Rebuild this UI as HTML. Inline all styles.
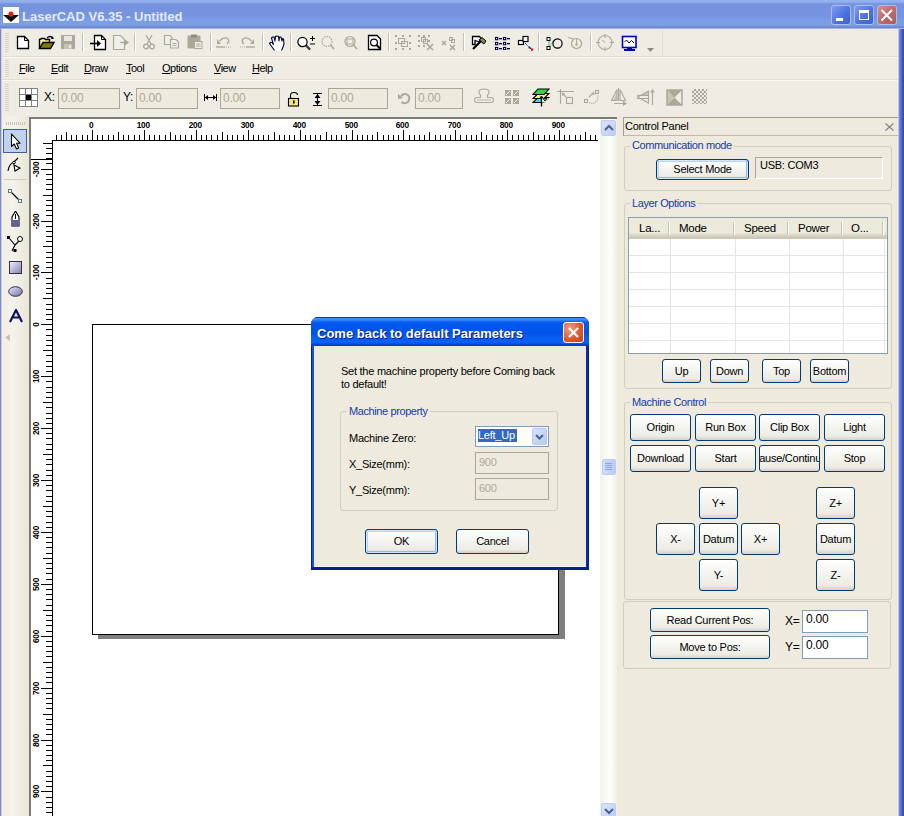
<!DOCTYPE html><html><head><meta charset="utf-8"><style>
*{margin:0;padding:0;box-sizing:border-box}
html,body{width:904px;height:816px;overflow:hidden;background:#eeebde;font-family:"Liberation Sans", sans-serif;font-size:11px;color:#000;letter-spacing:-0.25px}
.a{position:absolute}
.t{position:absolute;white-space:nowrap;line-height:13px}
.btn{position:absolute;border:1px solid #003c74;border-radius:3px;background:linear-gradient(#ffffff 0%,#f6f6f2 40%,#ecebe4 85%,#d6d0c5 100%);text-align:center;white-space:nowrap;font-size:11px;color:#000}
.btn.def{box-shadow:inset 0 0 0 1px #cee7ff, inset -1px -1px 0 1px #98b8ea, inset 1px 1px 0 1px #bcd4f6}
.grp{position:absolute;border:1px solid #d0d0bf;border-radius:3px}
.glab{position:absolute;color:#143aa6;letter-spacing:-0.4px;background:#eeebde;padding:0 2px;white-space:nowrap;line-height:13px}
.edit{position:absolute;border:1px solid #7f9db9;background:#fff}
.edis{position:absolute;border:1px solid #a9a797;background:#eeebde;color:#aca899}
</style></head><body>
<div class="a" style="left:0;top:0;width:904px;height:30px;background:linear-gradient(#93b1ee 0px,#93b1ee 2px,#7f9ce3 3px,#7593dd 5px,#7694df 16px,#7a9ce8 20px,#7aa2e0 25px,#7088d0 27px,#6a80c8 28px,#e8ebf8 29px,#e8ebf8 30px)"></div>
<div class="a" style="left:0;top:29px;width:2px;height:787px;background:linear-gradient(90deg,#7f88c8 0px,#7f88c8 1px,#c8cdee 1px)"></div>
<svg class="a" style="left:3px;top:7px" width="16" height="16" viewBox="0 0 16 16">
<rect width="16" height="16" fill="#fff"/><path d="M0 8 L16 8 L8 15 Z" fill="#101010"/><circle cx="8" cy="7" r="2.6" fill="#e02010"/></svg>
<div class="t" style="left:22px;top:8.5px;font-weight:bold;font-size:13px;line-height:16px;color:#e4ebfb;letter-spacing:0px">LaserCAD V6.35 - Untitled</div>
<div class="a" style="left:831px;top:5px;width:20px;height:20px;border:1px solid #a9bdf3;border-radius:3px;background:linear-gradient(135deg,#7d9cf0,#4d6fdc 60%,#3f62d2)"><div class="a" style="left:4px;top:12px;width:7px;height:3px;background:#fff"></div></div>
<div class="a" style="left:854px;top:5px;width:20px;height:20px;border:1px solid #a9bdf3;border-radius:3px;background:linear-gradient(135deg,#7d9cf0,#4d6fdc 60%,#3f62d2)"><div class="a" style="left:4px;top:4px;width:10px;height:10px;border:1px solid #fff;border-top-width:3px"></div></div>
<div class="a" style="left:877px;top:5px;width:20px;height:20px;border:1px solid #a9bdf3;border-radius:3px;background:linear-gradient(135deg,#d78c8c,#b86868 60%,#a85c5c)"><svg class="a" style="left:0;top:0" width="18" height="18"><path d="M3.5 4 L14 14.5 M14 4 L3.5 14.5" stroke="#fff" stroke-width="1.9"/></svg></div>
<div class="a" style="left:2px;top:30px;width:897px;height:87px;background:#efede3"></div>
<div class="a" style="left:2px;top:56px;width:897px;height:1px;background:#e2dfd0"></div>
<div class="a" style="left:2px;top:57px;width:897px;height:1px;background:#f8f7f2"></div>
<div class="a" style="left:2px;top:79px;width:897px;height:1px;background:#e2dfd0"></div>
<div class="a" style="left:2px;top:80px;width:897px;height:1px;background:#f8f7f2"></div>
<div class="a" style="left:662px;top:29px;width:1px;height:27px;background:#e2dfd0"></div>
<div class="a" style="left:5px;top:33px;width:4px;height:1px;background:#d8d4c3"></div><div class="a" style="left:5px;top:35px;width:4px;height:1px;background:#d8d4c3"></div><div class="a" style="left:5px;top:37px;width:4px;height:1px;background:#d8d4c3"></div><div class="a" style="left:5px;top:39px;width:4px;height:1px;background:#d8d4c3"></div><div class="a" style="left:5px;top:41px;width:4px;height:1px;background:#d8d4c3"></div><div class="a" style="left:5px;top:43px;width:4px;height:1px;background:#d8d4c3"></div><div class="a" style="left:5px;top:45px;width:4px;height:1px;background:#d8d4c3"></div><div class="a" style="left:5px;top:47px;width:4px;height:1px;background:#d8d4c3"></div><div class="a" style="left:5px;top:49px;width:4px;height:1px;background:#d8d4c3"></div><div class="a" style="left:5px;top:51px;width:4px;height:1px;background:#d8d4c3"></div>
<div class="a" style="left:5px;top:60px;width:4px;height:1px;background:#d8d4c3"></div><div class="a" style="left:5px;top:62px;width:4px;height:1px;background:#d8d4c3"></div><div class="a" style="left:5px;top:64px;width:4px;height:1px;background:#d8d4c3"></div><div class="a" style="left:5px;top:66px;width:4px;height:1px;background:#d8d4c3"></div><div class="a" style="left:5px;top:68px;width:4px;height:1px;background:#d8d4c3"></div><div class="a" style="left:5px;top:70px;width:4px;height:1px;background:#d8d4c3"></div><div class="a" style="left:5px;top:72px;width:4px;height:1px;background:#d8d4c3"></div><div class="a" style="left:5px;top:74px;width:4px;height:1px;background:#d8d4c3"></div><div class="a" style="left:5px;top:76px;width:4px;height:1px;background:#d8d4c3"></div>
<div class="a" style="left:5px;top:84px;width:4px;height:1px;background:#d8d4c3"></div><div class="a" style="left:5px;top:86px;width:4px;height:1px;background:#d8d4c3"></div><div class="a" style="left:5px;top:88px;width:4px;height:1px;background:#d8d4c3"></div><div class="a" style="left:5px;top:90px;width:4px;height:1px;background:#d8d4c3"></div><div class="a" style="left:5px;top:92px;width:4px;height:1px;background:#d8d4c3"></div><div class="a" style="left:5px;top:94px;width:4px;height:1px;background:#d8d4c3"></div><div class="a" style="left:5px;top:96px;width:4px;height:1px;background:#d8d4c3"></div><div class="a" style="left:5px;top:98px;width:4px;height:1px;background:#d8d4c3"></div><div class="a" style="left:5px;top:100px;width:4px;height:1px;background:#d8d4c3"></div><div class="a" style="left:5px;top:102px;width:4px;height:1px;background:#d8d4c3"></div><div class="a" style="left:5px;top:104px;width:4px;height:1px;background:#d8d4c3"></div><div class="a" style="left:5px;top:106px;width:4px;height:1px;background:#d8d4c3"></div><div class="a" style="left:5px;top:108px;width:4px;height:1px;background:#d8d4c3"></div><div class="a" style="left:5px;top:110px;width:4px;height:1px;background:#d8d4c3"></div>
<div class="a" style="left:82px;top:33px;width:1px;height:18px;background:#c5c2b2"></div><div class="a" style="left:83px;top:33px;width:1px;height:18px;background:#fff"></div>
<div class="a" style="left:134px;top:33px;width:1px;height:18px;background:#c5c2b2"></div><div class="a" style="left:135px;top:33px;width:1px;height:18px;background:#fff"></div>
<div class="a" style="left:210px;top:33px;width:1px;height:18px;background:#c5c2b2"></div><div class="a" style="left:211px;top:33px;width:1px;height:18px;background:#fff"></div>
<div class="a" style="left:262px;top:33px;width:1px;height:18px;background:#c5c2b2"></div><div class="a" style="left:263px;top:33px;width:1px;height:18px;background:#fff"></div>
<div class="a" style="left:290px;top:33px;width:1px;height:18px;background:#c5c2b2"></div><div class="a" style="left:291px;top:33px;width:1px;height:18px;background:#fff"></div>
<div class="a" style="left:388px;top:33px;width:1px;height:18px;background:#c5c2b2"></div><div class="a" style="left:389px;top:33px;width:1px;height:18px;background:#fff"></div>
<div class="a" style="left:463px;top:33px;width:1px;height:18px;background:#c5c2b2"></div><div class="a" style="left:464px;top:33px;width:1px;height:18px;background:#fff"></div>
<div class="a" style="left:538px;top:33px;width:1px;height:18px;background:#c5c2b2"></div><div class="a" style="left:539px;top:33px;width:1px;height:18px;background:#fff"></div>
<div class="a" style="left:590px;top:33px;width:1px;height:18px;background:#c5c2b2"></div><div class="a" style="left:591px;top:33px;width:1px;height:18px;background:#fff"></div>
<svg class="a" style="left:16px;top:35px" width="14" height="15" viewBox="0 0 14 15"><path d="M1.5 1.5 H8.5 L12.5 5.5 V13.5 H1.5 Z" fill="#fff" stroke="#000" stroke-width="1.3"/><path d="M8.5 1.5 V5.5 H12.5" fill="none" stroke="#000" stroke-width="1"/></svg>
<svg class="a" style="left:38px;top:35px" width="18" height="15" viewBox="0 0 18 15"><path d="M1.5 13.5 V4.5 L3.5 3.5 H6.5 L7.5 4.5 H11.5 V7.5" fill="#f4f48c" stroke="#000" stroke-width="1.4"/><path d="M1.5 13.5 L5 7.5 H16 L12.5 13.5 Z" fill="#7d7d10" stroke="#000" stroke-width="1.4"/><path d="M9 3 Q12 0 15 3" fill="none" stroke="#000" stroke-width="1.2"/><path d="M14 1 L16 4 L13 4 Z" fill="#000"/></svg>
<svg class="a" style="left:61px;top:35px" width="15" height="15" viewBox="0 0 15 15"><rect x="0" y="0" width="14" height="14" fill="#aca899"/><rect x="3" y="1" width="8" height="5" fill="#e8e6dc"/><rect x="3" y="9" width="8" height="5" fill="#c6c3b6"/><rect x="8" y="10" width="2" height="3" fill="#e8e6dc"/></svg>
<svg class="a" style="left:89px;top:34px" width="18" height="17" viewBox="0 0 18 17"><path d="M5.5 1.5 H12.5 L16.5 5.5 V15.5 H5.5 Z" fill="#fff" stroke="#000" stroke-width="1.3"/><path d="M12.5 1.5 V5.5 H16.5" fill="none" stroke="#000" stroke-width="1"/><path d="M1 9.5 H9" stroke="#000" stroke-width="1.6"/><path d="M8 6 L12 9.5 L8 13 Z" fill="#000"/></svg>
<svg class="a" style="left:112px;top:34px" width="18" height="17" viewBox="0 0 18 17"><path d="M1.5 1.5 H8.5 L12.5 5.5 V15.5 H1.5 Z" fill="#f0efe8" stroke="#aca899" stroke-width="1.2"/><path d="M8 8.5 H14" stroke="#aca899" stroke-width="1.2"/><path d="M13 5.5 L17 8.5 L13 11.5 Z" fill="#aca899"/></svg>
<svg class="a" style="left:143px;top:34px" width="12" height="16" viewBox="0 0 12 16"><path d="M3 1 L8 10 M9 1 L4 10" stroke="#aca899" stroke-width="1.3" fill="none"/><circle cx="3" cy="12.5" r="2.3" fill="none" stroke="#aca899" stroke-width="1.3"/><circle cx="9" cy="12.5" r="2.3" fill="none" stroke="#aca899" stroke-width="1.3"/></svg>
<svg class="a" style="left:163px;top:34px" width="17" height="15" viewBox="0 0 17 15"><path d="M1.5 1.5 H7 L9 3.5 V10.5 H1.5 Z" fill="#f0efe8" stroke="#aca899" stroke-width="1.2"/><path d="M7.5 5.5 H13 L15.5 8 V14 H7.5 Z" fill="#f0efe8" stroke="#aca899" stroke-width="1.2"/><path d="M9.5 9.5 H13.5 M9.5 11.5 H13.5" stroke="#aca899"/></svg>
<svg class="a" style="left:187px;top:34px" width="16" height="16" viewBox="0 0 16 16"><rect x="0.5" y="1.5" width="13" height="13" rx="1" fill="#aca899"/><rect x="4" y="0.5" width="6" height="3" fill="#8f8c80"/><rect x="7.5" y="7.5" width="7.5" height="7" fill="#f0efe8" stroke="#aca899"/><path d="M9 10 H13.5 M9 12 H13.5" stroke="#aca899"/></svg>
<svg class="a" style="left:216px;top:35px" width="16" height="14" viewBox="0 0 16 14"><path d="M3.5 6 Q8 1 12 4 Q14 6 11 9" fill="none" stroke="#aca899" stroke-width="1.4"/><path d="M1 4 L5 9 L1 9 Z" fill="#aca899"/><path d="M0 12 H9" stroke="#aca899" stroke-width="1.4"/><path d="M10 12 H15" stroke="#aca899" stroke-width="1" stroke-dasharray="1 1"/></svg>
<svg class="a" style="left:239px;top:35px" width="16" height="14" viewBox="0 0 16 14"><path d="M12.5 6 Q8 1 4 4 Q2 6 5 9" fill="none" stroke="#aca899" stroke-width="1.4"/><path d="M15 4 L11 9 L15 9 Z" fill="#aca899"/><path d="M7 12 H16" stroke="#aca899" stroke-width="1.4"/><path d="M1 12 H6" stroke="#aca899" stroke-width="1" stroke-dasharray="1 1"/></svg>
<svg class="a" style="left:269px;top:35px" width="17" height="17" viewBox="0 0 17 17"><path d="M5.5 15.5 L0.5 8.5 L1.5 7.5 L3 7.5 L4.5 9.5 L2.5 3 L3.5 2 L5 2 L6 6 L6.5 1.5 L8 1 L9.5 1.5 L10 6 L10.5 2 L12 2 L13 6 L13.5 3.5 L14.5 4 L15 9 L14 12 L12.5 15.5" fill="#fff" stroke="#000038" stroke-width="1.1" stroke-linejoin="round"/></svg>
<svg class="a" style="left:296px;top:35px" width="20" height="16" viewBox="0 0 20 16"><circle cx="6.5" cy="7" r="4.6" fill="#fff" stroke="#000" stroke-width="1.2"/><path d="M10 10.5 L14 14.5" stroke="#000" stroke-width="2.2"/><path d="M10.5 11 L13.5 14" stroke="#8080c0" stroke-width="1"/><path d="M14 3.5 H19 M16.5 1 V6 M14 9 H19" stroke="#000" stroke-width="1"/></svg>
<svg class="a" style="left:320px;top:35px" width="16" height="16" viewBox="0 0 16 16"><circle cx="7" cy="6.5" r="5" fill="none" stroke="#aca899" stroke-width="1.2" stroke-dasharray="1.5 1"/><path d="M10.5 10 L14 14" stroke="#aca899" stroke-width="1.6"/></svg>
<svg class="a" style="left:343px;top:35px" width="16" height="16" viewBox="0 0 16 16"><circle cx="7" cy="6.5" r="5" fill="none" stroke="#aca899" stroke-width="1.2"/><rect x="4" y="4" width="6" height="5" fill="none" stroke="#aca899"/><path d="M10.5 10 L14 14" stroke="#aca899" stroke-width="1.6"/></svg>
<svg class="a" style="left:367px;top:34px" width="15" height="17" viewBox="0 0 15 17"><path d="M1.5 1.5 H10 L13.5 5 V15.5 H1.5 Z" fill="#fff" stroke="#000" stroke-width="1.3"/><circle cx="7" cy="8.5" r="3.4" fill="none" stroke="#000" stroke-width="1.2"/><path d="M9.5 11 L13 14.5" stroke="#000" stroke-width="2"/></svg>
<svg class="a" style="left:395px;top:34px" width="16" height="16" viewBox="0 0 16 16"><g fill="#aca899"><rect x="0" y="1" width="2" height="2"/><rect x="7" y="1" width="2" height="2"/><rect x="14" y="1" width="2" height="2"/><rect x="0" y="8" width="2" height="2"/><rect x="14" y="8" width="2" height="2"/><rect x="0" y="14" width="2" height="2"/><rect x="7" y="14" width="2" height="2"/><rect x="14" y="14" width="2" height="2"/></g><rect x="3.5" y="4.5" width="6" height="5" fill="none" stroke="#aca899"/><rect x="6.5" y="7.5" width="6" height="5" fill="none" stroke="#aca899"/></svg>
<svg class="a" style="left:418px;top:34px" width="16" height="17" viewBox="0 0 16 17"><g fill="#aca899"><rect x="0" y="1" width="2" height="2"/><rect x="5" y="1" width="2" height="2"/><rect x="10" y="1" width="2" height="2"/><rect x="0" y="6" width="2" height="2"/><rect x="10" y="6" width="2" height="2"/><rect x="0" y="11" width="2" height="2"/><rect x="5" y="11" width="2" height="2"/></g><rect x="3.5" y="3.5" width="4" height="4" fill="none" stroke="#aca899"/><rect x="5.5" y="5.5" width="4" height="4" fill="none" stroke="#aca899"/><path d="M9 10 L15 16 M15 10 L9 16" stroke="#aca899" stroke-width="1.6"/></svg>
<svg class="a" style="left:441px;top:34px" width="17" height="17" viewBox="0 0 17 17"><path d="M1 7 L5 11 M5 7 L1 11" stroke="#aca899" stroke-width="1.4"/><rect x="8.5" y="3.5" width="3" height="3" fill="none" stroke="#aca899"/><rect x="10.5" y="5.5" width="3" height="3" fill="none" stroke="#aca899"/><path d="M9 11 L14 16 M14 11 L9 16" stroke="#aca899" stroke-width="1.6"/></svg>
<svg class="a" style="left:471px;top:35px" width="16" height="16" viewBox="0 0 16 16"><path d="M1.5 1.5 H8.5 L10.5 4 L9 7 L4 5.5 L4 9.5 H1.5 Z" fill="#fff" stroke="#000" stroke-width="1.3"/><path d="M8 5 L11 2.5 L15 6 L13 9 Z" fill="#8a8a50" stroke="#000" stroke-width="1"/><path d="M10 6 L2 14" stroke="#000" stroke-width="2.2"/></svg>
<svg class="a" style="left:494px;top:36px" width="17" height="14" viewBox="0 0 17 14"><g fill="#fff" stroke="#000030" stroke-width="1.1"><rect x="1.5" y="1.5" width="2.2" height="2.2"/><rect x="1.5" y="6.5" width="2.2" height="2.2"/><rect x="1.5" y="11.5" width="2.2" height="2.2"/><rect x="9.5" y="1.5" width="2.2" height="2.2"/><rect x="9.5" y="6.5" width="2.2" height="2.2"/><rect x="9.5" y="11.5" width="2.2" height="2.2"/></g><g fill="#000030"><rect x="5" y="2" width="3" height="1.3"/><rect x="5" y="7" width="3" height="1.3"/><rect x="5" y="12" width="3" height="1.3"/><rect x="13" y="2" width="3" height="1.3"/><rect x="13" y="7" width="3" height="1.3"/><rect x="13" y="12" width="3" height="1.3"/></g></svg>
<svg class="a" style="left:517px;top:35px" width="18" height="16" viewBox="0 0 18 16"><rect x="1.5" y="5.5" width="5" height="4" fill="#fff" stroke="#000" stroke-width="1.2"/><rect x="6" y="1.5" width="5" height="5" fill="#fff" stroke="#000" stroke-width="1.2"/><path d="M8 8 L14 14" stroke="#0020a0" stroke-width="1" stroke-dasharray="1.2 0.6"/><path d="M11 13 L14 14 L13 11 Z" fill="#0020a0"/><rect x="14" y="13.5" width="2.2" height="2.2" fill="#e00000"/></svg>
<svg class="a" style="left:546px;top:37px" width="17" height="13" viewBox="0 0 17 13"><path d="M3 2 L3 11" stroke="#40c0c0" stroke-width="1.2"/><path d="M3 11 L7 4" stroke="#a0d060" stroke-width="1"/><rect x="1" y="0.5" width="3" height="3" fill="#fff" stroke="#000"/><rect x="1" y="9.5" width="3" height="3" fill="#fff" stroke="#000"/><circle cx="11.5" cy="6.5" r="4.6" fill="none" stroke="#000" stroke-width="1.2"/></svg>
<svg class="a" style="left:567px;top:36px" width="16" height="14" viewBox="0 0 16 14"><path d="M1 1.5 L7 3" stroke="#aca899" stroke-width="1.2"/><circle cx="9.5" cy="7.5" r="5" fill="none" stroke="#aca899" stroke-width="1.2"/><path d="M9.5 3 V8" stroke="#aca899"/><circle cx="9.5" cy="8.5" r="1.2" fill="#aca899"/></svg>
<svg class="a" style="left:596px;top:34px" width="18" height="17" viewBox="0 0 18 17"><circle cx="9" cy="8.5" r="7" fill="none" stroke="#aca899" stroke-width="1.1"/><path d="M9 0 V4 M9 13 V17 M0 8.5 H4 M14 8.5 H18 M9 8.5 L6 6" stroke="#aca899" stroke-width="1"/></svg>
<svg class="a" style="left:621px;top:35px" width="17" height="16" viewBox="0 0 17 16"><rect x="1.5" y="1.5" width="13.5" height="11" fill="#fff" stroke="#0000c0" stroke-width="1.6"/><path d="M3.5 7 L5.5 5 L8 8 L10.5 5.5 L13 8" fill="none" stroke="#000040" stroke-width="1"/><rect x="6" y="13" width="5" height="1" fill="#0000c0"/><rect x="3" y="14" width="11" height="2" fill="#0000c0"/></svg>
<svg class="a" style="left:647px;top:48px" width="7" height="4" viewBox="0 0 7 4"><path d="M0 0 H7 L3.5 4 Z" fill="#8f8c80"/></svg>
<div class="t" style="left:19px;top:62px;letter-spacing:-0.5px"><u>F</u>ile</div>
<div class="t" style="left:51px;top:62px;letter-spacing:-0.5px"><u>E</u>dit</div>
<div class="t" style="left:84px;top:62px;letter-spacing:-0.5px"><u>D</u>raw</div>
<div class="t" style="left:126px;top:62px;letter-spacing:-0.5px"><u>T</u>ool</div>
<div class="t" style="left:162px;top:62px;letter-spacing:-0.5px"><u>O</u>ptions</div>
<div class="t" style="left:214px;top:62px;letter-spacing:-0.5px"><u>V</u>iew</div>
<div class="t" style="left:252px;top:62px;letter-spacing:-0.5px"><u>H</u>elp</div>
<svg class="a" style="left:19px;top:88px" width="19" height="19" viewBox="0 0 19 19"><rect x="0.5" y="0.5" width="18" height="18" fill="#fff" stroke="#808080"/><path d="M6.5 0 V19 M12.5 0 V19 M0 6.5 H19 M0 12.5 H19" stroke="#808080"/><rect x="7" y="7" width="5" height="5" fill="#000"/></svg>
<div class="t" style="left:44px;top:91px;font-size:12px">X:</div>
<div class="edis" style="left:58px;top:88px;width:62px;height:21px"><div class="t" style="left:2px;top:3px;font-size:12px;color:#aca899">0.00</div></div>
<div class="t" style="left:123px;top:91px;font-size:12px">Y:</div>
<div class="edis" style="left:136px;top:88px;width:62px;height:21px"><div class="t" style="left:2px;top:3px;font-size:12px;color:#aca899">0.00</div></div>
<svg class="a" style="left:204px;top:94px" width="13" height="7" viewBox="0 0 13 7"><path d="M0.5 0 V7 M12.5 0 V7 M1 3.5 H12" stroke="#000"/><path d="M1 3.5 L4 1 V6 Z M12 3.5 L9 1 V6 Z" fill="#000"/></svg>
<div class="edis" style="left:220px;top:88px;width:60px;height:21px"><div class="t" style="left:2px;top:3px;font-size:12px;color:#aca899">0.00</div></div>
<svg class="a" style="left:287px;top:91px" width="14" height="16" viewBox="0 0 14 16"><path d="M3.5 7 V4.5 Q3.5 1.5 7 1.5 Q10.5 1.5 10.5 4" fill="none" stroke="#000" stroke-width="1.2"/><rect x="1.5" y="7.5" width="10" height="7.5" fill="#f6e67a" stroke="#000" stroke-width="1.1"/><rect x="6" y="9.5" width="1.6" height="3" fill="#000"/></svg>
<svg class="a" style="left:313px;top:93px" width="10" height="13" viewBox="0 0 10 13"><path d="M0 0.5 H9 M0 12.5 H9 M4.5 1 V12" stroke="#000"/><path d="M4.5 1 L1.5 5 H7.5 Z M4.5 12 L1.5 8 H7.5 Z" fill="#000"/></svg>
<div class="edis" style="left:328px;top:88px;width:60px;height:21px"><div class="t" style="left:2px;top:3px;font-size:12px;color:#aca899">0.00</div></div>
<svg class="a" style="left:398px;top:92px" width="13" height="14" viewBox="0 0 13 14"><path d="M3 4 Q6 0.5 10 3 Q12.5 6.5 10 10 Q6.5 12.5 3.5 10" fill="none" stroke="#aca899" stroke-width="2"/><path d="M0 2 L5 6 L0 7 Z" fill="#aca899"/></svg>
<div class="edis" style="left:415px;top:88px;width:48px;height:21px"><div class="t" style="left:2px;top:3px;font-size:12px;color:#aca899">0.00</div></div>
<svg class="a" style="left:474px;top:88px" width="20" height="17" viewBox="0 0 20 17"><path d="M3 14.5 H17 Q19.5 14.5 19.5 12 Q19.5 9.5 17 9.5 H13.5 V7 Q15 6 15 4 Q15 1 10 1 Q5 1 5 4 Q5 6 6.5 7 V9.5 H3 Q0.5 9.5 0.5 12 Q0.5 14.5 3 14.5 Z" fill="none" stroke="#aca899" stroke-width="1.1"/><path d="M3 12 H17" stroke="#aca899" stroke-width="0.8"/></svg>
<svg class="a" style="left:504px;top:89px" width="17" height="17" viewBox="0 0 17 17"><g fill="#aca899"><path d="M1 1 H7 V7 H1 Z M9 1 H15 V7 H9 Z M1 9 H7 V15 H1 Z M9 9 H15 V15 H9 Z"/></g><path d="M2 6 L6 2 M10 6 L14 2 M2 14 L6 10 M10 14 L14 10" stroke="#f0efe8"/></svg>
<svg class="a" style="left:532px;top:88px" width="18" height="20" viewBox="0 0 18 20"><path d="M6 9.5 H17 L12 14.5 H1 Z" fill="#40dce8" stroke="#000" stroke-width="1.1"/><path d="M6 5.5 H17 L12 10.5 H1 Z" fill="#f4f088" stroke="#000" stroke-width="1.1"/><path d="M6 1 H17 L12 6.5 H1 Z" fill="#38d048" stroke="#000" stroke-width="1.1"/><path d="M10 10 L17 10 L13 14.5 H10 Z" fill="#e8f8f0"/><path d="M11 10.5 L15 10.5 L13 13 Z" fill="#40c0a0" stroke="#000" stroke-width="0.8"/><path d="M9.5 8.5 V18.5" stroke="#000" stroke-width="1.3"/><path d="M7.8 10.5 L9.5 8 L11.2 10.5" fill="none" stroke="#000" stroke-width="1"/></svg>
<svg class="a" style="left:556px;top:88px" width="19" height="17" viewBox="0 0 19 17"><g stroke="#aca899" stroke-width="1.1" fill="none"><path d="M4.5 1 V16 M1 3.5 H18"/><rect x="10.5" y="9.5" width="6" height="6"/><path d="M10 9 L6.5 5.5"/></g><path d="M5.5 4.5 L9 5.5 L6.5 8 Z" fill="#aca899"/></svg>
<svg class="a" style="left:583px;top:88px" width="18" height="17" viewBox="0 0 18 17"><g stroke="#aca899" stroke-width="1.1" fill="none"><rect x="1.5" y="11.5" width="3" height="3"/><rect x="12.5" y="2.5" width="3" height="3"/><path d="M6 14.5 Q10 17 13.5 13.5 Q16 10 14.5 7" stroke-dasharray="1.2 1"/><path d="M6 9 L10 5"/></g><path d="M11 3.5 L11.5 7 L8 6.5 Z" fill="#aca899"/></svg>
<svg class="a" style="left:610px;top:88px" width="18" height="18" viewBox="0 0 18 18"><g stroke="#aca899" stroke-width="1.1" fill="none"><path d="M7 1.5 V12.5 H1.5 Z"/><path d="M10 1.5 V12.5 H15.5 Z"/><path d="M8.5 0 V13 M4 15.5 H15"/></g><path d="M7 4 V12.5 H3 Z" fill="#aca899" opacity="0.6"/><path d="M13 13 L17 15.5 L13 18 Z" fill="#aca899"/></svg>
<svg class="a" style="left:636px;top:88px" width="19" height="18" viewBox="0 0 19 18"><g stroke="#aca899" stroke-width="1.1" fill="none"><path d="M1.5 9 L12.5 3 V15 Z"/><path d="M1 7.5 H12 M1 10.5 H12"/><path d="M16.5 3 V17"/></g><path d="M14 4.5 L16.5 1 L19 4.5 Z" fill="#aca899"/><path d="M12 3.5 V8 L4 8 Z" fill="#aca899" opacity="0.6"/></svg>
<svg class="a" style="left:666px;top:89px" width="17" height="17" viewBox="0 0 17 17"><path d="M1 1 H16 V16 H1 Z" fill="none" stroke="#aca899" stroke-width="1.5"/><path d="M1 1 L8.5 8.5 L16 1 Z M1 16 L8.5 8.5 L16 16 Z" fill="#aca899"/><path d="M1 1 L8.5 8.5 L1 16 Z" fill="#aca899" opacity="0.6"/></svg>
<div class="a" style="left:692px;top:89px;width:15px;height:15px;background-image:linear-gradient(45deg,#aca899 25%,transparent 25%,transparent 75%,#aca899 75%),linear-gradient(45deg,#aca899 25%,transparent 25%,transparent 75%,#aca899 75%);background-size:4px 4px;background-position:0 0,2px 2px"></div>
<div class="a" style="left:2px;top:116px;width:27px;height:700px;background:linear-gradient(90deg,#f1efe6,#f4f2ea 40%,#e9e6d8)"></div>

<div class="a" style="left:6px;top:122px;width:1px;height:3px;background:#c9c5b2"></div>
<div class="a" style="left:8px;top:122px;width:1px;height:3px;background:#c9c5b2"></div>
<div class="a" style="left:10px;top:122px;width:1px;height:3px;background:#c9c5b2"></div>
<div class="a" style="left:12px;top:122px;width:1px;height:3px;background:#c9c5b2"></div>
<div class="a" style="left:14px;top:122px;width:1px;height:3px;background:#c9c5b2"></div>
<div class="a" style="left:16px;top:122px;width:1px;height:3px;background:#c9c5b2"></div>
<div class="a" style="left:18px;top:122px;width:1px;height:3px;background:#c9c5b2"></div>
<div class="a" style="left:20px;top:122px;width:1px;height:3px;background:#c9c5b2"></div>
<div class="a" style="left:22px;top:122px;width:1px;height:3px;background:#c9c5b2"></div>
<div class="a" style="left:24px;top:122px;width:1px;height:3px;background:#c9c5b2"></div>
<div class="a" style="left:3px;top:129px;width:24px;height:24px;background:#c1d2ee;border:1px solid #41609e"></div>
<svg class="a" style="left:10px;top:133px" width="12" height="18" viewBox="0 0 12 18"><path d="M1.5 1 V13.5 L4.3 11 L6.5 16 L8.7 15 L6.6 10.2 L10 10.2 Z" fill="#fff" stroke="#000" stroke-width="1.1" stroke-linejoin="round"/></svg>
<svg class="a" style="left:7px;top:157px" width="16" height="16" viewBox="0 0 16 16"><path d="M1 14 Q2 7 7 5 L11 1" fill="none" stroke="#000" stroke-width="1.1"/><circle cx="7" cy="5.5" r="1.3" fill="#fff" stroke="#000"/><path d="M7 8 L8 14 L13 11 Z" fill="#fff" stroke="#000" stroke-width="1.1"/></svg>
<div class="a" style="left:4px;top:179px;width:22px;height:1px;background:#d0ccb8"></div>
<svg class="a" style="left:8px;top:189px" width="14" height="14" viewBox="0 0 14 14"><path d="M2 2 L12 12" stroke="#000" stroke-width="1.1"/><rect x="0.5" y="0.5" width="3" height="3" fill="#fff" stroke="#508080"/><rect x="10.5" y="10.5" width="3" height="3" fill="#fff" stroke="#508080"/></svg>
<svg class="a" style="left:10px;top:211px" width="11" height="17" viewBox="0 0 11 17"><path d="M5.5 0 L2 6 V15 H9 V6 Z" fill="#fff" stroke="#000" stroke-width="1.1"/><rect x="2.5" y="9" width="6" height="6" fill="#6060a0"/><path d="M5.5 3 V8" stroke="#000"/></svg>
<svg class="a" style="left:6px;top:235px" width="18" height="17" viewBox="0 0 18 17"><path d="M3 3 L9 10 L6 16 M9 10 L15 4" fill="none" stroke="#000" stroke-width="1.1"/><rect x="1" y="1" width="3" height="3" fill="#000"/><rect x="7.5" y="14" width="3" height="3" fill="#000"/><circle cx="14" cy="4" r="2.5" fill="#fff" stroke="#000"/></svg>
<svg class="a" style="left:9px;top:261px" width="13" height="13" viewBox="0 0 13 13"><rect x="0.5" y="0.5" width="12" height="12" fill="url(#gr1)" stroke="#303040"/><defs><linearGradient id="gr1" x1="0" y1="0" x2="1" y2="1"><stop offset="0" stop-color="#f0f0ff"/><stop offset="1" stop-color="#8080b0"/></linearGradient></defs></svg>
<svg class="a" style="left:8px;top:286px" width="15" height="11" viewBox="0 0 15 11"><defs><linearGradient id="gr2" x1="0" y1="0" x2="1" y2="1"><stop offset="0" stop-color="#e8e8f8"/><stop offset="1" stop-color="#7070a8"/></linearGradient></defs><ellipse cx="7.5" cy="5.5" rx="6.8" ry="4.8" fill="url(#gr2)" stroke="#303040"/></svg>
<svg class="a" style="left:9px;top:309px" width="14" height="14" viewBox="0 0 14 14"><path d="M1 13 L7 1 L13 13 M3.5 8.5 H10.5" fill="none" stroke="#0a1460" stroke-width="2.2"/></svg>
<svg class="a" style="left:5px;top:334px" width="6" height="7" viewBox="0 0 6 7"><path d="M5 0 L0 3.5 L5 7 Z" fill="#c9c5b2"/></svg>
<div class="a" style="left:29px;top:117px;width:588px;height:699px;background:#fff;border-left:2px solid #7d7b6d;border-top:2px solid #7d7b6d"></div>
<svg class="a" style="left:0;top:0" width="617" height="816" shape-rendering="crispEdges"><rect x="52" y="140" width="546" height="1" fill="#000"/><rect x="56" y="135" width="1" height="6" fill="#000"/><rect x="61" y="135" width="1" height="6" fill="#000"/><rect x="66" y="132" width="1" height="9" fill="#000"/><rect x="71" y="135" width="1" height="6" fill="#000"/><rect x="76" y="135" width="1" height="6" fill="#000"/><rect x="82" y="135" width="1" height="6" fill="#000"/><rect x="87" y="135" width="1" height="6" fill="#000"/><rect x="92" y="130" width="1" height="11" fill="#000"/><text x="91.3" y="128" font-size="9.5" font-weight="bold" text-anchor="middle" textLength="4.4" lengthAdjust="spacingAndGlyphs" fill="#000" font-family="Liberation Sans">0</text><rect x="97" y="135" width="1" height="6" fill="#000"/><rect x="102" y="135" width="1" height="6" fill="#000"/><rect x="108" y="135" width="1" height="6" fill="#000"/><rect x="113" y="135" width="1" height="6" fill="#000"/><rect x="118" y="132" width="1" height="9" fill="#000"/><rect x="123" y="135" width="1" height="6" fill="#000"/><rect x="128" y="135" width="1" height="6" fill="#000"/><rect x="134" y="135" width="1" height="6" fill="#000"/><rect x="139" y="135" width="1" height="6" fill="#000"/><rect x="144" y="130" width="1" height="11" fill="#000"/><text x="143.3" y="128" font-size="9.5" font-weight="bold" text-anchor="middle" textLength="13.200000000000001" lengthAdjust="spacingAndGlyphs" fill="#000" font-family="Liberation Sans">100</text><rect x="149" y="135" width="1" height="6" fill="#000"/><rect x="154" y="135" width="1" height="6" fill="#000"/><rect x="159" y="135" width="1" height="6" fill="#000"/><rect x="165" y="135" width="1" height="6" fill="#000"/><rect x="170" y="132" width="1" height="9" fill="#000"/><rect x="175" y="135" width="1" height="6" fill="#000"/><rect x="180" y="135" width="1" height="6" fill="#000"/><rect x="185" y="135" width="1" height="6" fill="#000"/><rect x="191" y="135" width="1" height="6" fill="#000"/><rect x="196" y="130" width="1" height="11" fill="#000"/><text x="195.3" y="128" font-size="9.5" font-weight="bold" text-anchor="middle" textLength="13.200000000000001" lengthAdjust="spacingAndGlyphs" fill="#000" font-family="Liberation Sans">200</text><rect x="201" y="135" width="1" height="6" fill="#000"/><rect x="206" y="135" width="1" height="6" fill="#000"/><rect x="211" y="135" width="1" height="6" fill="#000"/><rect x="217" y="135" width="1" height="6" fill="#000"/><rect x="222" y="132" width="1" height="9" fill="#000"/><rect x="227" y="135" width="1" height="6" fill="#000"/><rect x="232" y="135" width="1" height="6" fill="#000"/><rect x="237" y="135" width="1" height="6" fill="#000"/><rect x="243" y="135" width="1" height="6" fill="#000"/><rect x="248" y="130" width="1" height="11" fill="#000"/><text x="247.3" y="128" font-size="9.5" font-weight="bold" text-anchor="middle" textLength="13.200000000000001" lengthAdjust="spacingAndGlyphs" fill="#000" font-family="Liberation Sans">300</text><rect x="253" y="135" width="1" height="6" fill="#000"/><rect x="258" y="135" width="1" height="6" fill="#000"/><rect x="263" y="135" width="1" height="6" fill="#000"/><rect x="268" y="135" width="1" height="6" fill="#000"/><rect x="274" y="132" width="1" height="9" fill="#000"/><rect x="279" y="135" width="1" height="6" fill="#000"/><rect x="284" y="135" width="1" height="6" fill="#000"/><rect x="289" y="135" width="1" height="6" fill="#000"/><rect x="294" y="135" width="1" height="6" fill="#000"/><rect x="300" y="130" width="1" height="11" fill="#000"/><text x="299.3" y="128" font-size="9.5" font-weight="bold" text-anchor="middle" textLength="13.200000000000001" lengthAdjust="spacingAndGlyphs" fill="#000" font-family="Liberation Sans">400</text><rect x="305" y="135" width="1" height="6" fill="#000"/><rect x="310" y="135" width="1" height="6" fill="#000"/><rect x="315" y="135" width="1" height="6" fill="#000"/><rect x="320" y="135" width="1" height="6" fill="#000"/><rect x="326" y="132" width="1" height="9" fill="#000"/><rect x="331" y="135" width="1" height="6" fill="#000"/><rect x="336" y="135" width="1" height="6" fill="#000"/><rect x="341" y="135" width="1" height="6" fill="#000"/><rect x="346" y="135" width="1" height="6" fill="#000"/><rect x="352" y="130" width="1" height="11" fill="#000"/><text x="351.3" y="128" font-size="9.5" font-weight="bold" text-anchor="middle" textLength="13.200000000000001" lengthAdjust="spacingAndGlyphs" fill="#000" font-family="Liberation Sans">500</text><rect x="357" y="135" width="1" height="6" fill="#000"/><rect x="362" y="135" width="1" height="6" fill="#000"/><rect x="367" y="135" width="1" height="6" fill="#000"/><rect x="372" y="135" width="1" height="6" fill="#000"/><rect x="377" y="132" width="1" height="9" fill="#000"/><rect x="383" y="135" width="1" height="6" fill="#000"/><rect x="388" y="135" width="1" height="6" fill="#000"/><rect x="393" y="135" width="1" height="6" fill="#000"/><rect x="398" y="135" width="1" height="6" fill="#000"/><rect x="403" y="130" width="1" height="11" fill="#000"/><text x="402.3" y="128" font-size="9.5" font-weight="bold" text-anchor="middle" textLength="13.200000000000001" lengthAdjust="spacingAndGlyphs" fill="#000" font-family="Liberation Sans">600</text><rect x="409" y="135" width="1" height="6" fill="#000"/><rect x="414" y="135" width="1" height="6" fill="#000"/><rect x="419" y="135" width="1" height="6" fill="#000"/><rect x="424" y="135" width="1" height="6" fill="#000"/><rect x="429" y="132" width="1" height="9" fill="#000"/><rect x="435" y="135" width="1" height="6" fill="#000"/><rect x="440" y="135" width="1" height="6" fill="#000"/><rect x="445" y="135" width="1" height="6" fill="#000"/><rect x="450" y="135" width="1" height="6" fill="#000"/><rect x="455" y="130" width="1" height="11" fill="#000"/><text x="454.3" y="128" font-size="9.5" font-weight="bold" text-anchor="middle" textLength="13.200000000000001" lengthAdjust="spacingAndGlyphs" fill="#000" font-family="Liberation Sans">700</text><rect x="460" y="135" width="1" height="6" fill="#000"/><rect x="466" y="135" width="1" height="6" fill="#000"/><rect x="471" y="135" width="1" height="6" fill="#000"/><rect x="476" y="135" width="1" height="6" fill="#000"/><rect x="481" y="132" width="1" height="9" fill="#000"/><rect x="486" y="135" width="1" height="6" fill="#000"/><rect x="492" y="135" width="1" height="6" fill="#000"/><rect x="497" y="135" width="1" height="6" fill="#000"/><rect x="502" y="135" width="1" height="6" fill="#000"/><rect x="507" y="130" width="1" height="11" fill="#000"/><text x="506.3" y="128" font-size="9.5" font-weight="bold" text-anchor="middle" textLength="13.200000000000001" lengthAdjust="spacingAndGlyphs" fill="#000" font-family="Liberation Sans">800</text><rect x="512" y="135" width="1" height="6" fill="#000"/><rect x="518" y="135" width="1" height="6" fill="#000"/><rect x="523" y="135" width="1" height="6" fill="#000"/><rect x="528" y="135" width="1" height="6" fill="#000"/><rect x="533" y="132" width="1" height="9" fill="#000"/><rect x="538" y="135" width="1" height="6" fill="#000"/><rect x="544" y="135" width="1" height="6" fill="#000"/><rect x="549" y="135" width="1" height="6" fill="#000"/><rect x="554" y="135" width="1" height="6" fill="#000"/><rect x="559" y="130" width="1" height="11" fill="#000"/><text x="558.3" y="128" font-size="9.5" font-weight="bold" text-anchor="middle" textLength="13.200000000000001" lengthAdjust="spacingAndGlyphs" fill="#000" font-family="Liberation Sans">900</text><rect x="564" y="135" width="1" height="6" fill="#000"/><rect x="569" y="135" width="1" height="6" fill="#000"/><rect x="575" y="135" width="1" height="6" fill="#000"/><rect x="580" y="135" width="1" height="6" fill="#000"/><rect x="585" y="132" width="1" height="9" fill="#000"/><rect x="590" y="135" width="1" height="6" fill="#000"/><rect x="595" y="135" width="1" height="6" fill="#000"/><rect x="52" y="140" width="1" height="676" fill="#000"/><rect x="31" y="159" width="21" height="1" fill="#000"/><rect x="43" y="143" width="9" height="1" fill="#000"/><rect x="46" y="148" width="6" height="1" fill="#000"/><rect x="46" y="153" width="6" height="1" fill="#000"/><rect x="46" y="158" width="6" height="1" fill="#000"/><rect x="46" y="163" width="6" height="1" fill="#000"/><rect x="41" y="169" width="11" height="1" fill="#000"/><text transform="translate(39,169.5) rotate(-90)" x="0" y="0" font-size="9.5" font-weight="bold" text-anchor="middle" textLength="15.700000000000001" lengthAdjust="spacingAndGlyphs" fill="#000" font-family="Liberation Sans">-300</text><rect x="46" y="174" width="6" height="1" fill="#000"/><rect x="46" y="179" width="6" height="1" fill="#000"/><rect x="46" y="184" width="6" height="1" fill="#000"/><rect x="46" y="189" width="6" height="1" fill="#000"/><rect x="43" y="195" width="9" height="1" fill="#000"/><rect x="46" y="200" width="6" height="1" fill="#000"/><rect x="46" y="205" width="6" height="1" fill="#000"/><rect x="46" y="210" width="6" height="1" fill="#000"/><rect x="46" y="215" width="6" height="1" fill="#000"/><rect x="41" y="221" width="11" height="1" fill="#000"/><text transform="translate(39,221.5) rotate(-90)" x="0" y="0" font-size="9.5" font-weight="bold" text-anchor="middle" textLength="15.700000000000001" lengthAdjust="spacingAndGlyphs" fill="#000" font-family="Liberation Sans">-200</text><rect x="46" y="226" width="6" height="1" fill="#000"/><rect x="46" y="231" width="6" height="1" fill="#000"/><rect x="46" y="236" width="6" height="1" fill="#000"/><rect x="46" y="241" width="6" height="1" fill="#000"/><rect x="43" y="246" width="9" height="1" fill="#000"/><rect x="46" y="252" width="6" height="1" fill="#000"/><rect x="46" y="257" width="6" height="1" fill="#000"/><rect x="46" y="262" width="6" height="1" fill="#000"/><rect x="46" y="267" width="6" height="1" fill="#000"/><rect x="41" y="272" width="11" height="1" fill="#000"/><text transform="translate(39,272.5) rotate(-90)" x="0" y="0" font-size="9.5" font-weight="bold" text-anchor="middle" textLength="15.700000000000001" lengthAdjust="spacingAndGlyphs" fill="#000" font-family="Liberation Sans">-100</text><rect x="46" y="278" width="6" height="1" fill="#000"/><rect x="46" y="283" width="6" height="1" fill="#000"/><rect x="46" y="288" width="6" height="1" fill="#000"/><rect x="46" y="293" width="6" height="1" fill="#000"/><rect x="43" y="298" width="9" height="1" fill="#000"/><rect x="46" y="304" width="6" height="1" fill="#000"/><rect x="46" y="309" width="6" height="1" fill="#000"/><rect x="46" y="314" width="6" height="1" fill="#000"/><rect x="46" y="319" width="6" height="1" fill="#000"/><rect x="41" y="324" width="11" height="1" fill="#000"/><text transform="translate(39,324.5) rotate(-90)" x="0" y="0" font-size="9.5" font-weight="bold" text-anchor="middle" textLength="4.4" lengthAdjust="spacingAndGlyphs" fill="#000" font-family="Liberation Sans">0</text><rect x="46" y="329" width="6" height="1" fill="#000"/><rect x="46" y="335" width="6" height="1" fill="#000"/><rect x="46" y="340" width="6" height="1" fill="#000"/><rect x="46" y="345" width="6" height="1" fill="#000"/><rect x="43" y="350" width="9" height="1" fill="#000"/><rect x="46" y="355" width="6" height="1" fill="#000"/><rect x="46" y="361" width="6" height="1" fill="#000"/><rect x="46" y="366" width="6" height="1" fill="#000"/><rect x="46" y="371" width="6" height="1" fill="#000"/><rect x="41" y="376" width="11" height="1" fill="#000"/><text transform="translate(39,376.5) rotate(-90)" x="0" y="0" font-size="9.5" font-weight="bold" text-anchor="middle" textLength="13.200000000000001" lengthAdjust="spacingAndGlyphs" fill="#000" font-family="Liberation Sans">100</text><rect x="46" y="381" width="6" height="1" fill="#000"/><rect x="46" y="387" width="6" height="1" fill="#000"/><rect x="46" y="392" width="6" height="1" fill="#000"/><rect x="46" y="397" width="6" height="1" fill="#000"/><rect x="43" y="402" width="9" height="1" fill="#000"/><rect x="46" y="407" width="6" height="1" fill="#000"/><rect x="46" y="413" width="6" height="1" fill="#000"/><rect x="46" y="418" width="6" height="1" fill="#000"/><rect x="46" y="423" width="6" height="1" fill="#000"/><rect x="41" y="428" width="11" height="1" fill="#000"/><text transform="translate(39,428.5) rotate(-90)" x="0" y="0" font-size="9.5" font-weight="bold" text-anchor="middle" textLength="13.200000000000001" lengthAdjust="spacingAndGlyphs" fill="#000" font-family="Liberation Sans">200</text><rect x="46" y="433" width="6" height="1" fill="#000"/><rect x="46" y="438" width="6" height="1" fill="#000"/><rect x="46" y="444" width="6" height="1" fill="#000"/><rect x="46" y="449" width="6" height="1" fill="#000"/><rect x="43" y="454" width="9" height="1" fill="#000"/><rect x="46" y="459" width="6" height="1" fill="#000"/><rect x="46" y="464" width="6" height="1" fill="#000"/><rect x="46" y="470" width="6" height="1" fill="#000"/><rect x="46" y="475" width="6" height="1" fill="#000"/><rect x="41" y="480" width="11" height="1" fill="#000"/><text transform="translate(39,480.5) rotate(-90)" x="0" y="0" font-size="9.5" font-weight="bold" text-anchor="middle" textLength="13.200000000000001" lengthAdjust="spacingAndGlyphs" fill="#000" font-family="Liberation Sans">300</text><rect x="46" y="485" width="6" height="1" fill="#000"/><rect x="46" y="490" width="6" height="1" fill="#000"/><rect x="46" y="496" width="6" height="1" fill="#000"/><rect x="46" y="501" width="6" height="1" fill="#000"/><rect x="43" y="506" width="9" height="1" fill="#000"/><rect x="46" y="511" width="6" height="1" fill="#000"/><rect x="46" y="516" width="6" height="1" fill="#000"/><rect x="46" y="522" width="6" height="1" fill="#000"/><rect x="46" y="527" width="6" height="1" fill="#000"/><rect x="41" y="532" width="11" height="1" fill="#000"/><text transform="translate(39,532.5) rotate(-90)" x="0" y="0" font-size="9.5" font-weight="bold" text-anchor="middle" textLength="13.200000000000001" lengthAdjust="spacingAndGlyphs" fill="#000" font-family="Liberation Sans">400</text><rect x="46" y="537" width="6" height="1" fill="#000"/><rect x="46" y="542" width="6" height="1" fill="#000"/><rect x="46" y="547" width="6" height="1" fill="#000"/><rect x="46" y="553" width="6" height="1" fill="#000"/><rect x="43" y="558" width="9" height="1" fill="#000"/><rect x="46" y="563" width="6" height="1" fill="#000"/><rect x="46" y="568" width="6" height="1" fill="#000"/><rect x="46" y="573" width="6" height="1" fill="#000"/><rect x="46" y="579" width="6" height="1" fill="#000"/><rect x="41" y="584" width="11" height="1" fill="#000"/><text transform="translate(39,584.5) rotate(-90)" x="0" y="0" font-size="9.5" font-weight="bold" text-anchor="middle" textLength="13.200000000000001" lengthAdjust="spacingAndGlyphs" fill="#000" font-family="Liberation Sans">500</text><rect x="46" y="589" width="6" height="1" fill="#000"/><rect x="46" y="594" width="6" height="1" fill="#000"/><rect x="46" y="599" width="6" height="1" fill="#000"/><rect x="46" y="605" width="6" height="1" fill="#000"/><rect x="43" y="610" width="9" height="1" fill="#000"/><rect x="46" y="615" width="6" height="1" fill="#000"/><rect x="46" y="620" width="6" height="1" fill="#000"/><rect x="46" y="625" width="6" height="1" fill="#000"/><rect x="46" y="631" width="6" height="1" fill="#000"/><rect x="41" y="636" width="11" height="1" fill="#000"/><text transform="translate(39,636.5) rotate(-90)" x="0" y="0" font-size="9.5" font-weight="bold" text-anchor="middle" textLength="13.200000000000001" lengthAdjust="spacingAndGlyphs" fill="#000" font-family="Liberation Sans">600</text><rect x="46" y="641" width="6" height="1" fill="#000"/><rect x="46" y="646" width="6" height="1" fill="#000"/><rect x="46" y="651" width="6" height="1" fill="#000"/><rect x="46" y="656" width="6" height="1" fill="#000"/><rect x="43" y="662" width="9" height="1" fill="#000"/><rect x="46" y="667" width="6" height="1" fill="#000"/><rect x="46" y="672" width="6" height="1" fill="#000"/><rect x="46" y="677" width="6" height="1" fill="#000"/><rect x="46" y="682" width="6" height="1" fill="#000"/><rect x="41" y="688" width="11" height="1" fill="#000"/><text transform="translate(39,688.5) rotate(-90)" x="0" y="0" font-size="9.5" font-weight="bold" text-anchor="middle" textLength="13.200000000000001" lengthAdjust="spacingAndGlyphs" fill="#000" font-family="Liberation Sans">700</text><rect x="46" y="693" width="6" height="1" fill="#000"/><rect x="46" y="698" width="6" height="1" fill="#000"/><rect x="46" y="703" width="6" height="1" fill="#000"/><rect x="46" y="708" width="6" height="1" fill="#000"/><rect x="43" y="714" width="9" height="1" fill="#000"/><rect x="46" y="719" width="6" height="1" fill="#000"/><rect x="46" y="724" width="6" height="1" fill="#000"/><rect x="46" y="729" width="6" height="1" fill="#000"/><rect x="46" y="734" width="6" height="1" fill="#000"/><rect x="41" y="740" width="11" height="1" fill="#000"/><text transform="translate(39,740.5) rotate(-90)" x="0" y="0" font-size="9.5" font-weight="bold" text-anchor="middle" textLength="13.200000000000001" lengthAdjust="spacingAndGlyphs" fill="#000" font-family="Liberation Sans">800</text><rect x="46" y="745" width="6" height="1" fill="#000"/><rect x="46" y="750" width="6" height="1" fill="#000"/><rect x="46" y="755" width="6" height="1" fill="#000"/><rect x="46" y="760" width="6" height="1" fill="#000"/><rect x="43" y="765" width="9" height="1" fill="#000"/><rect x="46" y="771" width="6" height="1" fill="#000"/><rect x="46" y="776" width="6" height="1" fill="#000"/><rect x="46" y="781" width="6" height="1" fill="#000"/><rect x="46" y="786" width="6" height="1" fill="#000"/><rect x="41" y="791" width="11" height="1" fill="#000"/><text transform="translate(39,791.5) rotate(-90)" x="0" y="0" font-size="9.5" font-weight="bold" text-anchor="middle" textLength="13.200000000000001" lengthAdjust="spacingAndGlyphs" fill="#000" font-family="Liberation Sans">900</text><rect x="46" y="797" width="6" height="1" fill="#000"/><rect x="46" y="802" width="6" height="1" fill="#000"/><rect x="46" y="807" width="6" height="1" fill="#000"/><rect x="46" y="812" width="6" height="1" fill="#000"/><rect x="98" y="330" width="467" height="309" fill="#808080"/><rect x="92" y="324" width="467" height="311" fill="#fff"/><rect x="92.5" y="324.5" width="466" height="310" fill="none" stroke="#000" stroke-width="1"/></svg>
<div class="a" style="left:600px;top:119px;width:17px;height:697px;background:linear-gradient(90deg,#f3f1ec,#fefefb 60%,#f0efe8)"></div>
<div class="a" style="left:601px;top:120px;width:15px;height:16px;border:1px solid #bccdf3;border-radius:2px;background:linear-gradient(135deg,#dbe5fb,#bacdf6)"><svg class="a" style="left:0;top:1px" width="14" height="12"><path d="M3 8 L7 4 L11 8" fill="none" stroke="#4d6185" stroke-width="2"/></svg></div>
<div class="a" style="left:601px;top:803px;width:15px;height:16px;border:1px solid #bccdf3;border-radius:2px;background:linear-gradient(135deg,#dbe5fb,#bacdf6)"><svg class="a" style="left:0;top:1px" width="14" height="12"><path d="M3 4 L7 8 L11 4" fill="none" stroke="#4d6185" stroke-width="2"/></svg></div>
<div class="a" style="left:617px;top:119px;width:2px;height:697px;background:#fbfaf5"></div>
<div class="a" style="left:602px;top:459px;width:14px;height:16px;border:1px solid #bccdf3;border-radius:2px;background:linear-gradient(90deg,#cfdcfa,#b9cbf3)"></div>
<div class="a" style="left:605px;top:463px;width:7px;height:1px;background:#8ca4e0"></div>
<div class="a" style="left:605px;top:465px;width:7px;height:1px;background:#8ca4e0"></div>
<div class="a" style="left:605px;top:467px;width:7px;height:1px;background:#8ca4e0"></div>
<div class="a" style="left:605px;top:469px;width:7px;height:1px;background:#8ca4e0"></div>
<div class="a" style="left:617px;top:116px;width:282px;height:700px;background:#eeebde"></div>
<div class="a" style="left:623px;top:117px;width:276px;height:19px;border-top:1px solid #a19e8e;border-left:1px solid #a19e8e;border-bottom:1px solid #bdbaab;border-right:1px solid #f4f3ee"></div>
<div class="t" style="left:625px;top:120px">Control Panel</div>
<svg class="a" style="left:885px;top:123px" width="9" height="8" viewBox="0 0 9 8"><path d="M0.5 0.5 L8.5 7.5 M8.5 0.5 L0.5 7.5" stroke="#808080" stroke-width="1.1"/></svg>
<div class="grp" style="left:624px;top:146px;width:268px;height:45px"></div>
<div class="glab" style="left:630px;top:139px">Communication mode</div>
<div class="btn def" style="left:656px;top:159px;width:93px;height:21px;line-height:19px;">Select Mode</div>
<div class="a" style="left:755px;top:157px;width:128px;height:22px;border-top:1px solid #aca899;border-left:1px solid #aca899;border-bottom:1px solid #fff;border-right:1px solid #fff"></div>
<div class="t" style="left:760px;top:159px">USB: COM3</div>
<div class="grp" style="left:624px;top:203px;width:268px;height:186px"></div>
<div class="glab" style="left:630px;top:197px">Layer Options</div>
<div class="a" style="left:628px;top:217px;width:260px;height:137px;border:1px solid #8b9cab;background:#fff"></div>
<div class="a" style="left:629px;top:218px;width:258px;height:21px;background:linear-gradient(#ebeadb,#ebeadb 15px,#e2dece 16px,#d6d2c2 18px,#cbc7b8 20px)"></div>
<div class="a" style="left:668px;top:222px;width:1px;height:13px;background:#c7c5b2"></div><div class="a" style="left:669px;top:222px;width:1px;height:13px;background:#fff"></div>
<div class="a" style="left:733px;top:222px;width:1px;height:13px;background:#c7c5b2"></div><div class="a" style="left:734px;top:222px;width:1px;height:13px;background:#fff"></div>
<div class="a" style="left:787px;top:222px;width:1px;height:13px;background:#c7c5b2"></div><div class="a" style="left:788px;top:222px;width:1px;height:13px;background:#fff"></div>
<div class="a" style="left:841px;top:222px;width:1px;height:13px;background:#c7c5b2"></div><div class="a" style="left:842px;top:222px;width:1px;height:13px;background:#fff"></div>
<div class="a" style="left:882px;top:222px;width:1px;height:13px;background:#c7c5b2"></div><div class="a" style="left:883px;top:222px;width:1px;height:13px;background:#fff"></div>
<div class="t" style="left:639px;top:222px;font-size:11.5px">La...</div>
<div class="t" style="left:679px;top:222px;font-size:11.5px">Mode</div>
<div class="t" style="left:744px;top:222px;font-size:11.5px">Speed</div>
<div class="t" style="left:798px;top:222px;font-size:11.5px">Power</div>
<div class="t" style="left:851px;top:222px;font-size:11.5px">O...</div>
<div class="a" style="left:670px;top:239px;width:1px;height:114px;background:#e5e4e0"></div>
<div class="a" style="left:735px;top:239px;width:1px;height:114px;background:#e5e4e0"></div>
<div class="a" style="left:789px;top:239px;width:1px;height:114px;background:#e5e4e0"></div>
<div class="a" style="left:843px;top:239px;width:1px;height:114px;background:#e5e4e0"></div>
<div class="a" style="left:884px;top:239px;width:1px;height:114px;background:#e5e4e0"></div>
<div class="a" style="left:629px;top:255px;width:258px;height:1px;background:#e5e4e0"></div>
<div class="a" style="left:629px;top:272px;width:258px;height:1px;background:#e5e4e0"></div>
<div class="a" style="left:629px;top:289px;width:258px;height:1px;background:#e5e4e0"></div>
<div class="a" style="left:629px;top:306px;width:258px;height:1px;background:#e5e4e0"></div>
<div class="a" style="left:629px;top:323px;width:258px;height:1px;background:#e5e4e0"></div>
<div class="a" style="left:629px;top:340px;width:258px;height:1px;background:#e5e4e0"></div>
<div class="btn" style="left:662px;top:359px;width:39px;height:24px;line-height:22px;">Up</div>
<div class="btn" style="left:710px;top:359px;width:39px;height:24px;line-height:22px;">Down</div>
<div class="btn" style="left:762px;top:359px;width:39px;height:24px;line-height:22px;">Top</div>
<div class="btn" style="left:810px;top:359px;width:39px;height:24px;line-height:22px;">Bottom</div>
<div class="grp" style="left:624px;top:402px;width:268px;height:198px"></div>
<div class="glab" style="left:630px;top:396px">Machine Control</div>
<div class="btn" style="left:630px;top:414px;width:61px;height:27px;line-height:25px;">Origin</div>
<div class="btn" style="left:630px;top:445px;width:61px;height:27px;line-height:25px;">Download</div>
<div class="btn" style="left:695px;top:414px;width:61px;height:27px;line-height:25px;">Run Box</div>
<div class="btn" style="left:695px;top:445px;width:61px;height:27px;line-height:25px;">Start</div>
<div class="btn" style="left:759px;top:414px;width:61px;height:27px;line-height:25px;">Clip Box</div>
<div class="btn" style="left:759px;top:445px;width:61px;height:27px;line-height:25px;overflow:hidden"><span style="position:absolute;left:50%;top:0;transform:translateX(-50%)">Pause/Continue</span></div>
<div class="btn" style="left:824px;top:414px;width:61px;height:27px;line-height:25px;">Light</div>
<div class="btn" style="left:824px;top:445px;width:61px;height:27px;line-height:25px;">Stop</div>
<div class="btn" style="left:699px;top:487px;width:39px;height:32px;line-height:30px;">Y+</div>
<div class="btn" style="left:656px;top:523px;width:39px;height:32px;line-height:30px;">X-</div>
<div class="btn" style="left:699px;top:523px;width:39px;height:32px;line-height:30px;">Datum</div>
<div class="btn" style="left:741px;top:523px;width:39px;height:32px;line-height:30px;">X+</div>
<div class="btn" style="left:699px;top:559px;width:39px;height:32px;line-height:30px;">Y-</div>
<div class="btn" style="left:816px;top:487px;width:39px;height:32px;line-height:30px;">Z+</div>
<div class="btn" style="left:816px;top:523px;width:39px;height:32px;line-height:30px;">Datum</div>
<div class="btn" style="left:816px;top:559px;width:39px;height:32px;line-height:30px;">Z-</div>
<div class="grp" style="left:623px;top:601px;width:268px;height:68px"></div>
<div class="btn" style="left:650px;top:608px;width:120px;height:24px;line-height:22px;">Read Current Pos:</div>
<div class="btn" style="left:650px;top:635px;width:120px;height:24px;line-height:22px;">Move to Pos:</div>
<div class="t" style="left:785px;top:615px;font-size:12px">X=</div>
<div class="t" style="left:785px;top:641px;font-size:12px">Y=</div>
<div class="edit" style="left:802px;top:610px;width:66px;height:23px"><div class="t" style="left:3px;top:2px;font-size:12px">0.00</div></div>
<div class="edit" style="left:802px;top:636px;width:66px;height:23px"><div class="t" style="left:3px;top:2px;font-size:12px">0.00</div></div>
<div class="a" style="left:311px;top:317px;width:278px;height:253px;border-radius:7px 7px 0 0;background:#0a1e8e"></div><div class="a" style="left:312px;top:317px;width:276px;height:250px;border-radius:7px 7px 0 0;background:linear-gradient(90deg,#0846e0,#1a5cf0 1px,#0a4ae6 2px,#0a4ae6 272px,#0838c0 273px,#0a2aa0 274px)"></div>
<div class="a" style="left:311px;top:317px;width:278px;height:29px;border-radius:7px 7px 0 0;background:linear-gradient(#0a36b8 0px,#0a36b8 1px,#3d8cff 1px,#3a88fc 3px,#1a6cf8 4px,#0058ee 6px,#0052e6 16px,#0a5ff2 21px,#0a60f4 26px,#0048d8 27px,#003ac8 29px)"></div>
<div class="a" style="left:314px;top:346px;width:272px;height:221px;background:#eeebde;border-bottom:1px solid #f8f8f4"></div>
<div class="t" style="left:317px;top:326px;letter-spacing:0;font-weight:bold;font-size:13px;line-height:15px;color:#fff;text-shadow:1px 1px #0a1883">Come back to default Parameters</div>
<div class="a" style="left:563px;top:322px;width:21px;height:21px;border:1px solid #fff;border-radius:3px;background:radial-gradient(circle at 30% 30%,#f0a080,#e05a30 55%,#c83c10)"><svg class="a" style="left:0;top:0" width="19" height="19"><path d="M5 5 L14 14 M14 5 L5 14" stroke="#fff" stroke-width="2.2"/></svg></div>
<div class="t" style="left:341px;top:365px;line-height:12.5px">Set the machine property before Coming back<br>to default!</div>
<div class="grp" style="left:340px;top:411px;width:218px;height:100px"></div>
<div class="glab" style="left:347px;top:405px">Machine property</div>
<div class="t" style="left:349px;top:432px">Machine Zero:</div>
<div class="t" style="left:349px;top:458px">X_Size(mm):</div>
<div class="t" style="left:349px;top:484px">Y_Size(mm):</div>
<div class="edit" style="left:475px;top:426px;width:74px;height:21px"></div>
<div class="a" style="left:478px;top:429px;width:39px;height:13px;background:#316ac5"></div>
<div class="t" style="left:478px;top:429px;color:#fff">Left_Up</div>
<div class="a" style="left:532px;top:428px;width:15px;height:17px;border:1px solid #b6c9f4;border-radius:2px;background:linear-gradient(135deg,#d8e3fc,#b7cbf5)"><svg class="a" style="left:0;top:1px" width="13" height="13"><path d="M3 5 L6.5 8.5 L10 5" fill="none" stroke="#4d6185" stroke-width="2"/></svg></div>
<div class="edis" style="left:475px;top:452px;width:74px;height:22px"><div class="t" style="left:3px;top:3px">900</div></div>
<div class="edis" style="left:475px;top:478px;width:74px;height:22px"><div class="t" style="left:3px;top:3px">600</div></div>
<div class="btn def" style="left:365px;top:529px;width:73px;height:25px;line-height:23px;">OK</div>
<div class="btn" style="left:456px;top:529px;width:73px;height:25px;line-height:23px;">Cancel</div>
<div class="a" style="left:898px;top:29px;width:6px;height:787px;background:linear-gradient(90deg,#b8c4ee 0px,#b8c4ee 1px,#7d8fe0 1px,#6a7fd8 2px,#5a6ed0 3px,#4a5cc0 4px,#3a4ab0 5px)"></div>
</body></html>
